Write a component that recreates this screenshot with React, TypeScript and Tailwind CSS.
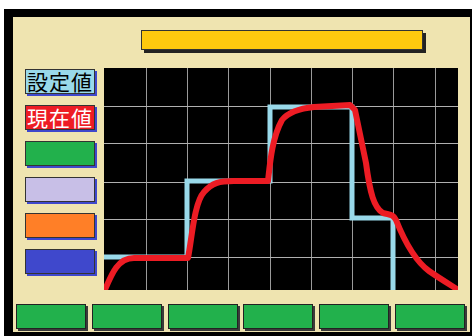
// App.tsx
const font = { fontFamily: '"Noto Sans CJK JP", "Noto Sans", sans-serif' };

const sideButtons = [
  { label: "設定値", cls: "bg-[#99d9ea] text-black" },
  { label: "現在値", cls: "bg-[#ed1c24] text-white" },
  { label: "", cls: "bg-[#22b14c]" },
  { label: "", cls: "bg-[#c8bfe7]" },
  { label: "", cls: "bg-[#ff7f27]" },
  { label: "", cls: "bg-[#3f48cc]" },
];

const vLines = [42, 83, 124, 166, 207, 248, 289, 331];
const hLines = [38, 75, 114, 151, 189];

function Chart() {
  return (
    <div className="w-[354px] h-[222px] bg-black overflow-hidden">
      <svg width="354" height="222" viewBox="0 0 354 222">
        {/* grid */}
        {vLines.map((x) => (
          <line key={"v" + x} x1={x + 0.5} y1="0" x2={x + 0.5} y2="222" stroke="#9a9a9a" strokeWidth="1" />
        ))}
        {hLines.map((y) => (
          <line key={"h" + y} x1="0" y1={y + 0.5} x2="354" y2={y + 0.5} stroke="#b0b0b0" strokeWidth="1" />
        ))}
        {/* setpoint */}
        <path
          d="M0,189 H83 V113 H166 V39 H248 V150 H289 V226"
          fill="none"
          stroke="#99d9ea"
          strokeWidth="5"
        />
        {/* present value */}
        <path
          d="M0,224 C8,205 14,190 30,190 L84,190 C88,170 90,135 100,124 C108,115 115,113 130,113 L164,113 C166,95 168,70 178,52 C186,42 200,40 210,39 L246,37 L251,42 L262,95 C266,125 270,140 279,145 C286,147 289,146 292,152 C300,172 310,192 325,203 C335,210 345,216 356,223"
          fill="none"
          stroke="#ed1c24"
          strokeWidth="6"
          strokeLinejoin="round"
        />
      </svg>
    </div>
  );
}

export default function App() {
  return (
    <div className="w-full h-[336px] bg-white overflow-hidden" style={font}>
      <div className="ml-[4px] mt-[9px] bg-black pl-[9px] pt-[8px] pr-[2px] pb-[10px]">
        <div className="w-[457px] h-[315px] bg-[#efe4b0] pt-[13px]">
          {/* title bar */}
          <div className="pl-[128px]">
            <div className="w-[282px] h-[20px] bg-[#ffc90e] border border-[#333] shadow-[3px_3px_0_#222]" />
          </div>

          {/* legend + chart */}
          <div className="mt-[18px] pl-[12px] flex gap-[9px]">
            <div className="w-[70px] pt-[1px] flex flex-col gap-[11px]">
              {sideButtons.map((b, i) => (
                <div
                  key={i}
                  className={`h-[25px] w-[70px] border border-[#333] shadow-[2px_2px_0_#3f48cc] flex items-center justify-center text-[21px] leading-none tracking-[1px] ${b.cls}`}
                >
                  {b.label}
                </div>
              ))}
            </div>
            <Chart />
          </div>

          {/* bottom buttons */}
          <div className="mt-[14px] pl-[3px] flex gap-[5.8px]">
            {[0, 1, 2, 3, 4, 5].map((i) => (
              <div
                key={i}
                className="w-[70px] h-[25px] bg-[#22b14c] border border-[#222] shadow-[2px_2px_0_#3a3a3a]"
              />
            ))}
          </div>
        </div>
      </div>
    </div>
  );
}
